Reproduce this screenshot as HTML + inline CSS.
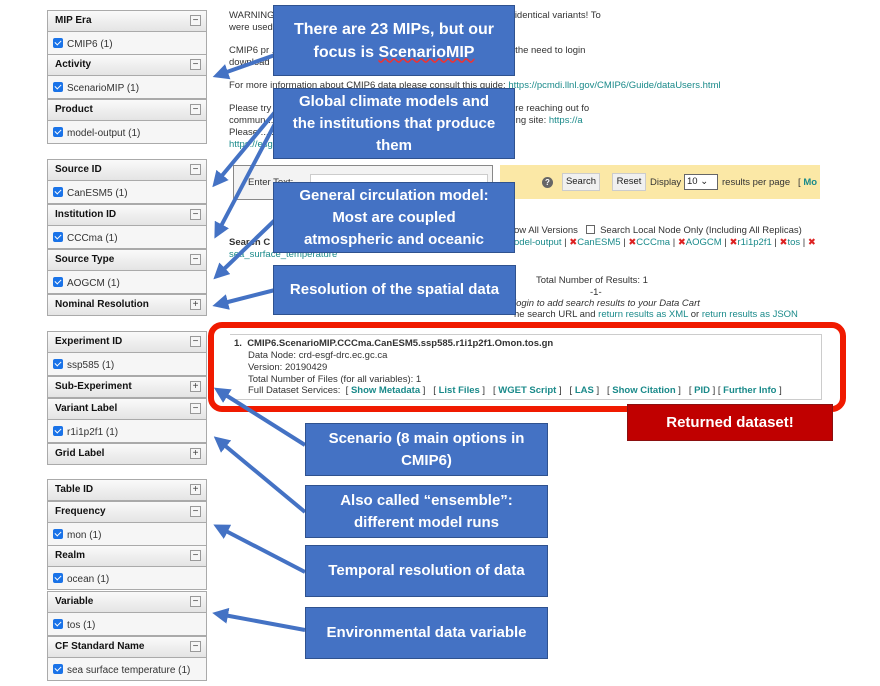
<!DOCTYPE html>
<html><head><meta charset="utf-8"><style>
*{margin:0;padding:0;box-sizing:border-box}
body{width:880px;height:686px;background:#fff;position:relative;overflow:hidden;font-family:"Liberation Sans",Arial,sans-serif;font-size:10px;color:#222}
.a{position:absolute}
.h{position:absolute;left:47px;width:160px;height:22px;border:1px solid #aaa;background:linear-gradient(#fafafa,#e4e4e4);font-weight:bold;font-size:10px;padding:4px 0 0 7px;color:#111}
.h i{position:absolute;right:5px;top:4px;width:11px;height:11px;border:1px solid #999;background:#f6f6f6;font-style:normal;font-size:10px;line-height:9px;text-align:center;color:#444;font-weight:normal}
.b{position:absolute;left:47px;width:160px;height:23px;border:1px solid #aaa;border-top:none;background:#f6f6f6;font-size:10px;padding:6px 0 0 5px;color:#333}
.b s{display:inline-block;width:10px;height:10px;background:#1a73e8;border-radius:2px;vertical-align:-1px;margin-right:4px;text-decoration:none;position:relative}
.b s:after{content:"";position:absolute;left:3px;top:1px;width:3px;height:5px;border:solid #fff;border-width:0 1.5px 1.5px 0;transform:rotate(45deg)}
.t{position:absolute;font-size:9.5px;color:#333;white-space:nowrap;line-height:11.5px}
.l{color:#1a8a8a}
.box{position:absolute;background:#4472c4;border:1px solid #2f528f;color:#fff;font-weight:bold;text-align:center;display:flex;align-items:center;justify-content:center;font-size:15px;line-height:22px;font-family:"Liberation Sans",sans-serif}
.box span{display:block}
</style></head><body>

<div class="t" style="left:229px;top:10px">WARNING: ... models, identical values of variant_label do not imply identical variants! To</div>
<div class="t" style="left:229px;top:22px">were used ... s and documentation provided through ES-DOC.</div>
<div class="t" style="left:229px;top:45px">CMIP6 pr ... be performed with the -s option to a wget script without the need to login</div>
<div class="t" style="left:229px;top:57px">download ... H should never be combined.</div>
<div class="t" style="left:229px;top:80px">For more information about CMIP6 data please consult this guide: <span class="l">https://pcmdi.llnl.gov/CMIP6/Guide/dataUsers.html</span></div>
<div class="t" style="left:229px;top:103px">Please try ... now undergoing beta testing. For this test release we are reaching out fo</div>
<div class="t" style="left:229px;top:115px">commun ... The beta-test web application can be found at the following site: <span class="l">https://a</span></div>
<div class="t" style="left:229px;top:127px">Please ... :</div>
<div class="t l" style="left:229px;top:139px">https://esg</div>
<div class="a" style="left:233px;top:165px;width:260px;height:35px;border:1px solid #888;background:#f3f3f3"></div>
<div class="t" style="left:248px;top:177px">Enter Text:</div>
<div class="a" style="left:310px;top:174px;width:178px;height:18px;background:#fff;border:1px solid #ccc"></div>
<div class="a" style="left:500px;top:165px;width:320px;height:34px;background:#fbe8a6"></div>
<div class="a" style="left:542px;top:177px;width:11px;height:11px;border-radius:50%;background:#666;color:#fff;font-size:8px;text-align:center;line-height:11px;font-weight:bold">?</div>
<div class="a" style="left:562px;top:173px;width:38px;height:18px;border:1px solid #ccc;background:#f0f0f0;font-size:9.5px;text-align:center;line-height:16px">Search</div>
<div class="a" style="left:612px;top:173px;width:34px;height:18px;border:1px solid #ccc;background:#f0f0f0;font-size:9.5px;text-align:center;line-height:16px">Reset</div>
<div class="t" style="left:650px;top:177px">Display</div>
<div class="a" style="left:684px;top:174px;width:34px;height:16px;border:1px solid #666;background:#fff;font-size:9.5px;padding-left:2px;line-height:14px">10 ⌄</div>
<div class="t" style="left:722px;top:177px">results per page &nbsp; [ <b class="l">Mo</b></div>
<div class="t" style="left:229px;top:237px"><b>Search C</b></div>
<div class="t l" style="left:229px;top:249px">sea_surface_temperature</div>
<div class="t" style="left:514px;top:225px">ow All Versions &nbsp;&nbsp;<span style="display:inline-block;width:9px;height:9px;border:1px solid #666;vertical-align:-1px"></span>&nbsp; Search Local Node Only (Including All Replicas)</div>
<div class="t" style="left:514px;top:237px"><span class="l">odel-output</span> | <span style="color:#d22">✖</span><span class="l">CanESM5</span> | <span style="color:#d22">✖</span><span class="l">CCCma</span> | <span style="color:#d22">✖</span><span class="l">AOGCM</span> | <span style="color:#d22">✖</span><span class="l">r1i1p2f1</span> | <span style="color:#d22">✖</span><span class="l">tos</span> | <span style="color:#d22">✖</span></div>
<div class="t" style="left:536px;top:275px">Total Number of Results: 1</div>
<div class="t" style="left:590px;top:287px">-1-</div>
<div class="t" style="left:514px;top:298px;font-style:italic">login to add search results to your Data Cart</div>
<div class="t" style="left:514px;top:309px">he search URL and <span class="l">return results as XML</span> or <span class="l">return results as JSON</span></div>

<div class="a" style="left:230px;top:334px;width:592px;height:66px;border:1px solid #ccc;border-left:none"></div>
<div class="t" style="left:234px;top:338px"><b>1.&nbsp; CMIP6.ScenarioMIP.CCCma.CanESM5.ssp585.r1i1p2f1.Omon.tos.gn</b></div>
<div class="t" style="left:248px;top:350px">Data Node: crd-esgf-drc.ec.gc.ca</div>
<div class="t" style="left:248px;top:362px">Version: 20190429</div>
<div class="t" style="left:248px;top:374px">Total Number of Files (for all variables): 1</div>
<div class="t" style="left:248px;top:385px">Full Dataset Services: &nbsp;[ <b class="l">Show Metadata</b> ] &nbsp; [ <b class="l">List Files</b> ] &nbsp; [ <b class="l">WGET Script</b> ] &nbsp; [ <b class="l">LAS</b> ] &nbsp; [ <b class="l">Show Citation</b> ] &nbsp; [ <b class="l">PID</b> ] [ <b class="l">Further Info</b> ]</div>
<div class="a" style="left:208px;top:322px;width:638px;height:90px;border:6px solid #f01a00;border-radius:14px"></div>
<div class="box" style="left:627px;top:404px;width:206px;height:37px;background:#c00000;border-color:#8b1010;font-size:15px"><span>Returned dataset!</span></div>

<div class="h" style="top:10px">MIP Era<i>−</i></div><div class="b" style="top:32px"><s></s>CMIP6 (1)</div>
<div class="h" style="top:54px">Activity<i>−</i></div><div class="b" style="top:76px"><s></s>ScenarioMIP (1)</div>
<div class="h" style="top:99px">Product<i>−</i></div><div class="b" style="top:121px"><s></s>model-output (1)</div>

<div class="h" style="top:159px">Source ID<i>−</i></div><div class="b" style="top:181px"><s></s>CanESM5 (1)</div>
<div class="h" style="top:204px">Institution ID<i>−</i></div><div class="b" style="top:226px"><s></s>CCCma (1)</div>
<div class="h" style="top:249px">Source Type<i>−</i></div><div class="b" style="top:271px"><s></s>AOGCM (1)</div>
<div class="h" style="top:294px">Nominal Resolution<i>+</i></div>

<div class="h" style="top:331px">Experiment ID<i>−</i></div><div class="b" style="top:353px"><s></s>ssp585 (1)</div>
<div class="h" style="top:376px">Sub-Experiment<i>+</i></div>
<div class="h" style="top:398px">Variant Label<i>−</i></div><div class="b" style="top:420px"><s></s>r1i1p2f1 (1)</div>
<div class="h" style="top:443px">Grid Label<i>+</i></div>

<div class="h" style="top:479px">Table ID<i>+</i></div>
<div class="h" style="top:501px">Frequency<i>−</i></div><div class="b" style="top:523px"><s></s>mon (1)</div>
<div class="h" style="top:545px">Realm<i>−</i></div><div class="b" style="top:567px"><s></s>ocean (1)</div>
<div class="h" style="top:591px">Variable<i>−</i></div><div class="b" style="top:613px"><s></s>tos (1)</div>
<div class="h" style="top:636px">CF Standard Name<i>−</i></div><div class="b" style="top:658px"><s></s>sea surface temperature (1)</div>

<svg class="a" style="left:0;top:0" width="880" height="686">
<defs><marker id="m" markerWidth="4" markerHeight="4" refX="1" refY="2" orient="auto" markerUnits="strokeWidth"><path d="M0,0 L4,2 L0,4z" fill="#4472c4"/></marker></defs>
<g stroke="#4472c4" stroke-width="4" marker-end="url(#m)">
<line x1="275" y1="55" x2="224" y2="73"/>
<line x1="275" y1="112" x2="220" y2="178"/>
<line x1="278" y1="118" x2="220" y2="228"/>
<line x1="275" y1="220" x2="222" y2="271"/>
<line x1="275" y1="290" x2="224" y2="303"/>
<line x1="305" y1="445" x2="224" y2="394"/>
<line x1="305" y1="512" x2="223" y2="444"/>
<line x1="305" y1="572" x2="224" y2="530"/>
<line x1="305" y1="630" x2="224" y2="615"/>
</g></svg>

<div class="box" style="left:273px;top:5px;width:242px;height:71px;font-size:16px;line-height:23px"><span>There are 23 MIPs, but our<br>focus is <u style="text-decoration:underline wavy #e33">ScenarioMIP</u></span></div>
<div class="box" style="left:273px;top:88px;width:242px;height:71px"><span>Global climate models and<br>the institutions that produce<br>them</span></div>
<div class="box" style="left:273px;top:182px;width:242px;height:71px"><span>General circulation model:<br>Most are coupled<br>atmospheric and oceanic</span></div>
<div class="box" style="left:273px;top:265px;width:243px;height:50px"><span>Resolution of the spatial data</span></div>
<div class="box" style="left:305px;top:423px;width:243px;height:53px"><span>Scenario (8 main options in<br>CMIP6)</span></div>
<div class="box" style="left:305px;top:485px;width:243px;height:53px"><span>Also called “ensemble”:<br>different model runs</span></div>
<div class="box" style="left:305px;top:545px;width:243px;height:52px"><span>Temporal resolution of data</span></div>
<div class="box" style="left:305px;top:607px;width:243px;height:52px"><span>Environmental data variable</span></div>
</body></html>
